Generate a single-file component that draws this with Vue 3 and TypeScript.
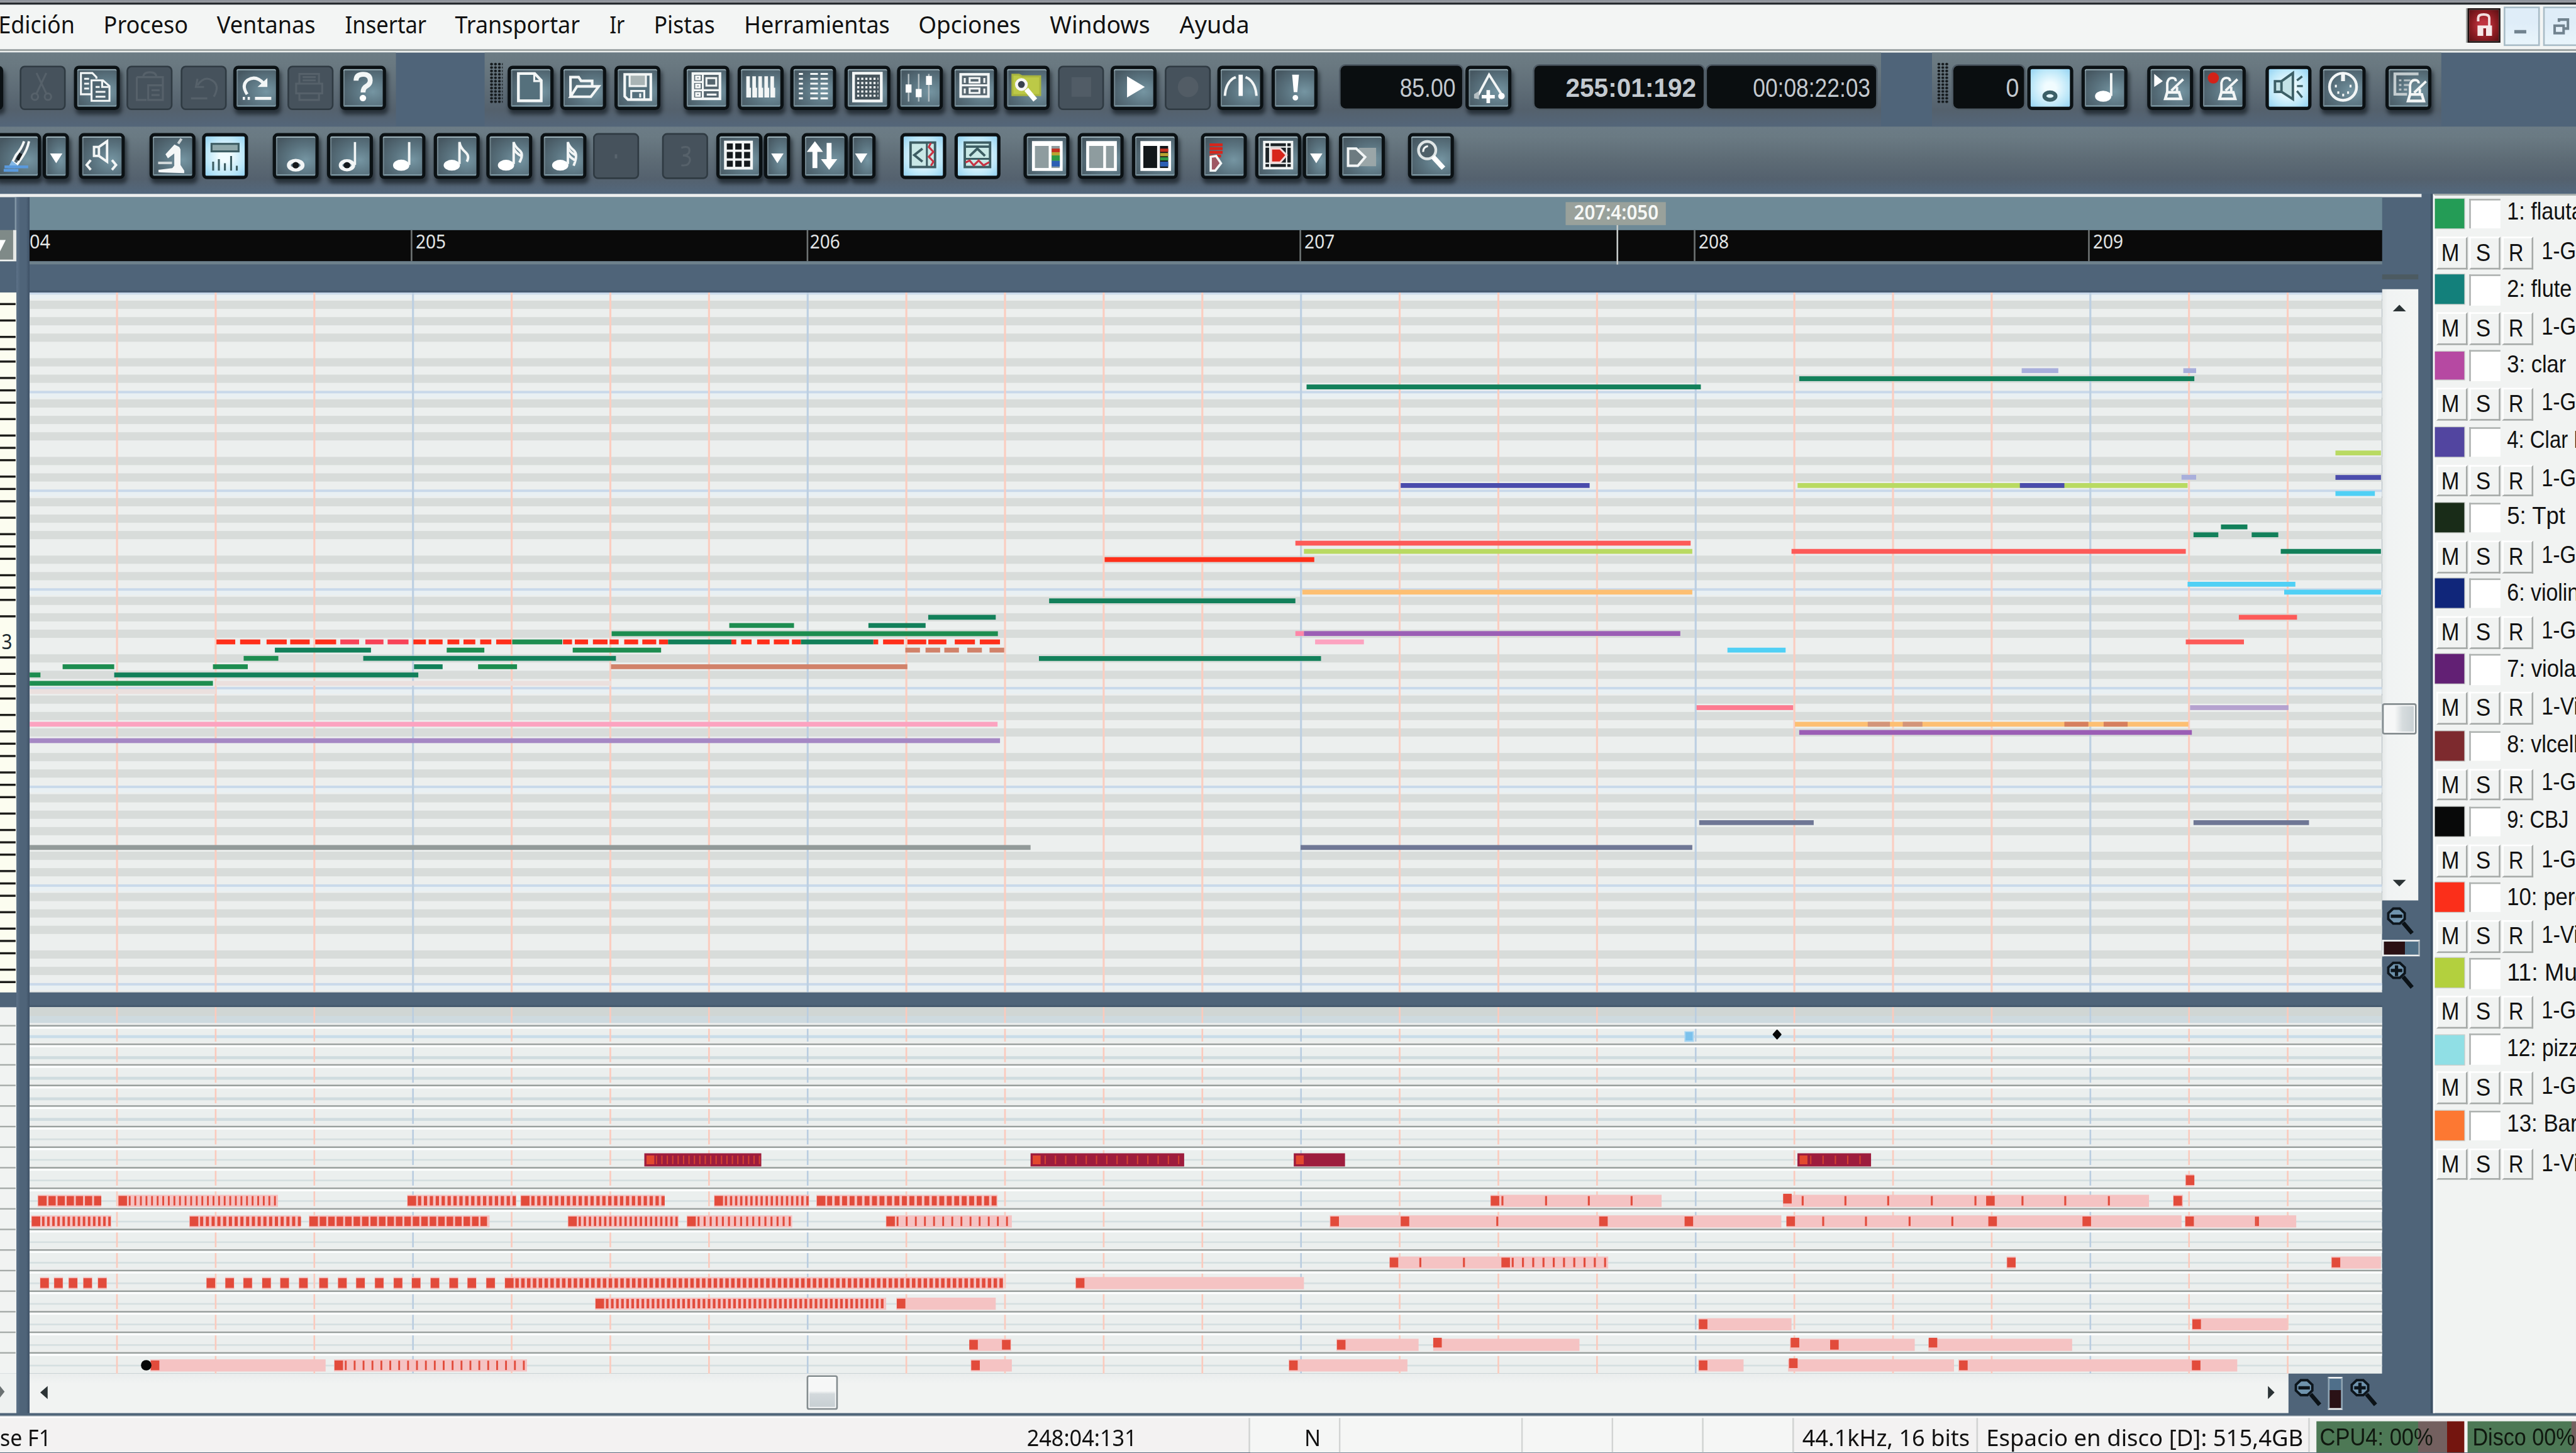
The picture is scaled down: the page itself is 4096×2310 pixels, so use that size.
<script setup lang="ts">
import { h, type FunctionalComponent } from 'vue'

// Text squeezed or stretched to an exact width
const Fit: FunctionalComponent<{ t: string; w: number; s: number }> = (p) =>
  h('svg', { width: p.w, height: p.s * 1.25, style: 'display:block;overflow:visible;flex:none' }, [
    h('text', { x: 0, y: p.s * 0.86, 'font-size': p.s, textLength: p.w, lengthAdjust: 'spacingAndGlyphs', fill: 'currentColor' }, p.t),
  ])
Fit.props = ['t', 'w', 's']

const menu: [string, number][] = [
  ['Edición', 46.5], ['Proceso', 51.5], ['Ventanas', 60], ['Insertar', 49.6], ['Transportar', 76], ['Ir', 9.3],
  ['Pistas', 37.2], ['Herramientas', 88.6], ['Opciones', 62.2], ['Windows', 61], ['Ayuda', 42.5],
]

const metro = (x: number, y: number) =>
  `<path d="M${x + 2} ${y + 8.5}V${y + 3}Q${x + 2.600} ${y} ${x + 5} ${y}T${x + 7.200} ${y + 2}M${x + 8} ${y + 5.5}V${y + 8.5}M${x + 4.5} ${y + 7.8}L${x + 11.8} ${y + 0.8}" stroke-width="1.5"/><path d="M${x + 0.8} ${y + 12.8}h9.600l-1.200-4h-7.200z" stroke-width="1.700"/>`
const icons: Record<string, string> = {
  none: '',
  cut: '<path d="M10 5.5L16 18M16 5.5L10 18"/><circle cx="9" cy="20" r="2"/><circle cx="17" cy="20" r="2"/>',
  copy: '<path d="M14.5 9V8L12 5.5H5v13h6" /><path d="M7 9h3M7 12h3M7 15h3"/><path d="M11.5 10h7l4 3.5v9h-11z" fill="#4f6570"/><path d="M18 10v4h4M14 14h2.5M14 17h6M14 20h6"/>',
  paste: '<path d="M6 8h16v10M6 8v14h6M10 8q0-3 4-3t4 3M13 13h9v9h-9zM15 16h5M15 19h5"/>',
  undo: '<path d="M10 9l-1 5h5M10 13q4-6 9-3t1 10M6 21h10"/>',
  redo: '<path d="M8.2 18.5Q4.500 13 8.500 9.800Q13.500 6.500 18.500 12" stroke-width="1.900"/><path d="M20.600 8.500v5.500h-6z" fill="#f3f6f6" stroke="none"/><path d="M13 21h10" stroke-width="1.800"/><path d="M5.500 21h1.400M8.500 21h1.400" stroke-width="1.800"/>',
  print: '<path d="M8 12V6h12v6M6 12h16v6H6zM8 18v4h12v-4M10 8h8M10 10h8"/>',
  help: '<path d="M9.500 10.200Q9.500 6.300 13.800 6.300T18.200 10Q18.200 12.300 15.800 13.600Q13.800 14.700 13.800 17.400" stroke-width="3"/><circle cx="13.700" cy="20.800" r="2" fill="#fff" stroke="none"/>',
  new: '<path d="M6.300 5.800h10l4 4.200v12.500h-14z" fill="#55707c" stroke-width="1.700"/><path d="M16 5.800v4.600h4.600"/>',
  open: '<path d="M6 19.500V8h5l1.500 2.300h6.800v4" stroke-width="1.600"/><path d="M6 20l4-6.300h13.300l-4.800 6.300z" fill="#55707c" stroke-width="1.600"/>',
  save: '<path d="M6 6.300h16v15.500H8l-2-2z" fill="#55707c" stroke-width="1.600"/><rect x="9" y="6.500" width="10" height="7" fill="#a9b4b5"/><path d="M10 21.500v-5h8v5M15.500 18v2.500"/>',
  tracks: '<rect x="5.500" y="5.800" width="16.600" height="15.500" fill="#55656e" stroke-width="1.600"/><path d="M11.600 6v15M5.500 16h16.500M5.500 11h6"/><rect x="7.500" y="7.600" width="2.200" height="1.700"/><rect x="7.500" y="12.600" width="2.200" height="1.700"/><rect x="7.500" y="17.800" width="2.200" height="1.700"/><rect x="13.800" y="8.600" width="6" height="4.600"/><path d="M14 18.700h6"/>',
  piano: [5, 8.7, 12.4, 16.1, 19.8].map((x) => `<path d="M${x} 7.500h2.200v7h.700v6h-2.900z" fill="#f3f6f6" stroke="none"/>`).join(''),
  list: [6, 9, 12, 15, 18, 21].map((y) => `<path d="M5 ${y}h2.500M12 ${y}h4.700M18.300 ${y}h4.500" stroke-width="1.200"/>`).join(''),
  dots: '<rect x="5.300" y="5.600" width="17" height="17" stroke-width="1.700" fill="#46545c"/>' + [9, 11.6, 14.2, 16.8, 19.4].map((y) => `<path d="M7.500 ${y}h13" stroke-dasharray="1.300 1.200" stroke-width="1.300"/>`).join(''),
  mixer: '<path d="M6.800 6v17M13 6v17M19.200 6v17" stroke="#b6c0c4" stroke-width=".9"/><path d="M5 12.500h3.600v5H5zM11.200 15.300h3.600v5h-3.600zM17.500 7.300h3.600v5.500h-3.600z" fill="#fff" stroke="none"/>',
  rack: '<rect x="5.500" y="6.300" width="17" height="13.600" stroke-width="1.600" fill="#55656e"/><path d="M5.500 13h17M8 8.500v3M20 8.500v3M8 15v3M20 15v3"/><rect x="11" y="8.600" width="6" height="2.700"/><rect x="11" y="15" width="6" height="2.700"/>',
  browse: '<path d="M5 6.500h4l2 1h11v11.500H5z" fill="#bcc947" stroke="#a9b53e"/><circle cx="10.500" cy="12.500" r="3" fill="#39414f" stroke="#f6f6f6" stroke-width="1.800"/><path d="M13.500 15.500L19 22" stroke-width="3" stroke="#fff"/>',
  stop: '<rect x="8" y="8" width="12" height="12" fill="#515c66" stroke="none"/>',
  play: '<path d="M9.800 7.500L20.700 14L9.800 20.500z" fill="#fff" stroke="none"/>',
  rec: '<circle cx="14" cy="14" r="6.300" fill="#525c65" stroke="none"/>',
  loop: '<path d="M4.300 19.500Q4.800 12 9.300 8.800L11 8M23.700 19.500Q23.200 12 18.700 8.800L17 8" stroke-width="1.500"/><path d="M14 6.500v13" stroke="#fff" stroke-width="2.600"/>',
  bang: '<path d="M12.300 6.500h4.200l-1 10.700h-2.200z" fill="#fff" stroke="none"/><circle cx="14.300" cy="20.600" r="1.700" fill="#fff" stroke="none"/>',
  tempo: '<path d="M7.500 19L14.200 6.500L21.800 18.500" stroke-width="1.500"/><path d="M5 21v-2.500l3-2v5z" fill="#b4bec2" stroke="none"/><circle cx="21.800" cy="19.600" r="2" fill="#fff" stroke="none"/><path d="M13.700 16v8M9.700 20h8" stroke="#fff" stroke-width="2.200"/>',
  whole: '<ellipse cx="13.800" cy="19.700" rx="4.200" ry="2.700" stroke-width="2.400"/><ellipse cx="13.800" cy="19.700" rx="2" ry="2" fill="#14191c" stroke="none"/>',
  wholeLit: '<ellipse cx="13.600" cy="19.600" rx="3.400" ry="2.300" stroke="#3c5f66" stroke-width="2.400"/>',
  half: '<ellipse cx="13" cy="19.700" rx="3.900" ry="2.600" stroke-width="2.300"/><ellipse cx="13" cy="19.700" rx="2" ry="1.900" fill="#14191c" stroke="none"/><path d="M17.900 5.500v14" stroke-width="1.400"/>',
  quarter: '<ellipse cx="13" cy="19.700" rx="5" ry="3.400" fill="#fff" stroke="none"/><path d="M17.900 5.500v14" stroke-width="1.500"/>',
  n8: '<ellipse cx="11.800" cy="19.700" rx="5" ry="3.300" fill="#fff" stroke="none"/><path d="M16.500 19V5.500Q17 9 20 11.500T21 17.500" stroke-width="1.500"/>',
  n16: '<ellipse cx="11.800" cy="19.700" rx="5" ry="3.300" fill="#fff" stroke="none"/><path d="M16.500 19V5.500Q17 8 20 10.500T20 18M16.600 9.500Q17.500 12 21 14" stroke-width="1.500"/>',
  n32: '<ellipse cx="11.800" cy="19.700" rx="5" ry="3.300" fill="#fff" stroke="none"/><path d="M16.500 19V5.500Q17 8 20 10.500T20 20M16.600 9Q17.500 11.500 21 13.500M16.600 12.500Q17.500 15 21.500 17" stroke-width="1.500"/>',
  dot: '<rect x="13" y="13" width="1.500" height="2.500" stroke="none" fill="#59646d"/>',
  triplet: '<path d="M11.500 9q5-1.500 5 1.500t-4 3.200q5 .3 4.200 3.500t-5.200 2.500"/>',
  midi: '<circle cx="14" cy="13.900" r="8.300" stroke-width="1.700"/><path d="M14 5.500v5" stroke-width="2.400"/><path d="M9 13.500h1.200M10.500 17.500h1.200M13.500 19h1.200M16.500 17.500h1.200M18 13.500h1.200" stroke-width="1.600"/>',
  metroPlay: '<path d="M5 6l5.300 4.500L5 14z" fill="#fff" stroke="none"/>' + metro(11, 8.5),
  metroRec: '<ellipse cx="8" cy="8.500" rx="3.400" ry="3.400" fill="#d32218" stroke="none"/>' + metro(11, 8.5),
  metroSet: '<path d="M20 6H5.500v12.500H13" stroke="#c3cccf" stroke-width="1.700"/><path d="M8 10h1.500M11 10h4M8 12.800h1.500M11 12.800h3M8 15.600h1.500M11 15.600h2" stroke="#b4bec2"/>' + metro(12.8, 9.8),
  sound: '<path d="M5.500 10.500h4v6.500h-4zM9.500 10.500L16.500 5.500V21.500L9.500 17" stroke="#3c5f66" stroke-width="1.500" fill="#c4e2e6"/><path d="M19 10l3.200-2.500M19 13.500h3.600M19 16.500l3.200 4" stroke="#3c5f66" stroke-width="1.300"/>',
  brush: '<path d="M18.500 5Q17 9.500 13.500 13.500L11.500 17.500L14 19.500L17.500 14.500Q20.500 10 21.500 5" fill="#51636e" stroke-width="1.500"/><path d="M16.500 12.500l-2 4" stroke="#14191c" stroke-width="2"/><path d="M11 16.800l3.500 2.900-1.500 1.800H8.500z" fill="#84b8e6" stroke="none"/><path d="M6.500 20.700h14.500M6 22.800h9" stroke="#5a9ade" stroke-width="1.800"/>',
  scrub: '<path d="M9 8.500h3v5.500H9zM12 8.500L17 5V17.500L12 14" stroke-width="1.500"/><path d="M7 16.500l-2.500 3 2.500 3M20 16.500l2.500 3-2.500 3" stroke-width="1.500"/>',
  micro: '<path d="M6.200 24v-1.500l8.500-1 1.200-1.500V12.500L12 15.500l-1.500-2.500 5.500-6 3 1.500.7 1.500v9.500l2.300 3.500v1.500z" fill="#f5f7f7" stroke="none"/><path d="M18.300 6.500l2-3M6 18.300h8.500" stroke="#cfd6d8" stroke-width="1.600"/>',
  infoLit: '<rect x="5.500" y="6.600" width="16.600" height="4.600" fill="#8fa8aa" stroke="#3d5d63"/><path d="M6.500 23v-5.500M10 23v-7M13.700 23v-4.500M17.500 23v-9M21 23v-3" stroke="#3d5d63" stroke-width="1.200"/>',
  grid: '<rect x="5.300" y="5.500" width="16" height="16" fill="#14191c" stroke-width="1.700"/><path d="M10.600 5.500v16M16 5.500v16M5.300 10.800h16M5.300 16.200h16" stroke-width="1.500"/>',
  updown: '<path d="M8.800 21.500V10M17.500 6v11" stroke="#fff" stroke-width="3"/><path d="M3.800 11.500h10L8.800 5zM12.500 16h10L17.500 22.500z" fill="#fff" stroke="none"/>',
  foldL: '<rect x="6" y="5.800" width="15" height="15" fill="#c9e8e6" stroke="#3d5d63" stroke-width="1.500"/><path d="M16 6v15" stroke="#3d5d63"/><path d="M13.300 9.500l-5 4 5 4" stroke="#3d5d63" stroke-width="1.500"/><path d="M18.500 6l-1.300 2.500 2.800 3-2.800 3 2.800 3-1.500 2.500" stroke="#c63344" stroke-width="1.200"/>',
  foldU: '<rect x="6" y="5.800" width="15.500" height="15" fill="#c9e8e6" stroke="#3d5d63" stroke-width="1.500"/><path d="M6 8.300h15.500" stroke="#3d5d63" stroke-width="1.500"/><path d="M6 15.800h15.500" stroke="#3d5d63"/><path d="M9 14l4.700-4.500 4.700 4.500" stroke="#3d5d63" stroke-width="1.500"/><path d="M6.500 18l2.500-1.200 2.500 3 3-3 3 3 3.500-2" stroke="#c63344" stroke-width="1.200"/>',
  paneA: '<rect x="5.800" y="5.800" width="17" height="16.500" fill="#8e9c9f" stroke="#fff" stroke-width="1.800"/><path d="M5.500 7h17.500M16 6v16" stroke="#fff" stroke-width="1.700"/><path d="M17 9.500h5v2.200h-5z" fill="#c43020" stroke="none"/><path d="M17 11.700h5v2h-5z" fill="#b9a431" stroke="none"/><path d="M17 13.700h5V17h-5z" fill="#2f9a44" stroke="none"/><path d="M17 17h5v3.500h-5z" fill="#2c5fb4" stroke="none"/>',
  paneB: '<rect x="5.800" y="5.800" width="17" height="16.500" fill="#8e9c9f" stroke="#fff" stroke-width="1.800"/><path d="M5.500 7h17.500M16.200 6v16" stroke="#fff" stroke-width="1.700"/>',
  paneC: '<rect x="5.800" y="5.800" width="17" height="16.500" fill="#12171a" stroke="#fff" stroke-width="1.800"/><path d="M5.500 7h17.500M16 6v16" stroke="#fff" stroke-width="1.700"/><path d="M17 9.500h5v2h-5z" fill="#c43020" stroke="none"/><path d="M17 12.200h5v2h-5z" fill="#b9a431" stroke="none"/><path d="M17 14.800h5v2h-5z" fill="#2f9a44" stroke="none"/><path d="M17 17.500h5v3h-5z" fill="#2c5fb4" stroke="none"/>',
  redA: '<path d="M5 7.200h8M5 9.500h8M5 11.800h8M5 14.100h7" stroke="#d8251b" stroke-width="1.700"/><path d="M5.700 14.500l3.300-.5 3 4.500-3.500 4.500H5.700z" fill="#9e5763" stroke-width="1.400"/>',
  redB: '<rect x="5.300" y="5.500" width="17" height="16" fill="#1c2226" stroke-width="1.500"/><path d="M8.700 5.500v16M19 5.500v16M5.300 8.500h17M5.300 18.500h17" stroke-width=".9"/><path d="M9.500 9.500h5.500l4 4-4 4.500h-5.500z" fill="#d8251b" stroke="#f3d9d9"/>',
  flagOut: '<path d="M12 9h10.500v11.300H10z" fill="#9aa6a8" stroke="none"/><path d="M5.300 9.500h5l5.500 5.200-4.500 5.300h-6z" stroke-width="1.500" fill="#6d7b80"/>',
  lens: '<circle cx="11.500" cy="10.500" r="5.300" stroke="#dfe5e6" stroke-width="1.700" fill="#4f6069"/><path d="M15 14.500L21.500 21.500" stroke="#fff" stroke-width="3"/><path d="M9 11.500q0-3 3-3.500"/>',
  drop: '<path d="M4.200 12.500h7.600L8 18.500z" fill="#fff" stroke="none"/>',
}

interface Item { k: string; i?: string; c?: string; x: number; w?: number; t?: string; tw?: number }
interface Placed extends Item { lead: number; wd: number }
// Turns left edges into the leading margin of each flex item
const place = (start: number, items: Item[]): Placed[] => {
  let end = start
  return items.map((it) => {
    const wd = it.w ?? 28
    const lead = +(it.x - end).toFixed(2)
    end = it.x + wd
    return { ...it, lead, wd }
  })
}
const b = (x: number, i: string, c = ''): Item => ({ k: 'b', x, i, c })
const seg1 = place(0, [b(-26, 'none'), b(12.3, 'cut', 'off'), b(44.6, 'copy'), b(77.2, 'paste', 'off'), b(109.8, 'undo', 'off'), b(142.1, 'redo'), b(174.7, 'print', 'off'), b(207.2, 'help')])
const seg2 = place(295, [
  { k: 'g', x: 298, w: 7.5 }, b(308.7, 'new'), b(341, 'open'), b(373.6, 'save'), b(416.2, 'tracks'), b(448.8, 'piano'), b(481.1, 'list'), b(513.7, 'dots'),
  b(546.3, 'mixer'), b(578.9, 'rack'), b(611.2, 'browse'), b(643.8, 'stop', 'off'), b(676.3, 'play'), b(709.2, 'rec', 'off'), b(741.3, 'loop'), b(773.8, 'bang'),
  { k: 'd', x: 815.8, w: 73.6, t: '85.00', tw: 34 }, b(891.8, 'tempo'), { k: 'd', x: 933.6, w: 103, t: '255:01:192', tw: 79.5, c: 'bold' }, { k: 'd', x: 1039.2, w: 103, t: '00:08:22:03', tw: 71.5 },
])
const seg3 = place(1175.6, [
  { k: 'g', x: 1179, w: 7.5 }, { k: 'd', x: 1188.8, w: 43.4, t: '0', tw: 8 }, b(1234.3, 'wholeLit', 'lit'), b(1266.9, 'quarter'), b(1306.7, 'metroPlay'),
  b(1339.4, 'metroRec'), b(1379.2, 'sound', 'lit'), b(1411.9, 'midi'), b(1451.9, 'metroSet'),
])
const dd = (x: number): Item => ({ k: 'b', x, i: 'drop', c: 'thin', w: 16 })
const row2 = place(0, [
  b(-3.5, 'brush'), dd(26.2), b(48.4, 'scrub'), b(90.7, 'micro'), b(123, 'infoLit', 'lit'), b(165.9, 'whole'), b(198.7, 'half'), b(231, 'quarter'), b(263.6, 'n8'),
  b(296.2, 'n16'), b(328.8, 'n32'), b(361.4, 'dot', 'off'), b(403.4, 'triplet', 'off'), b(436.3, 'grid'), dd(465.4), b(487.6, 'updown'), dd(516.7), b(548.5, 'foldL', 'lit'),
  b(581.1, 'foldU', 'lit'), b(623.5, 'paneA'), b(656.3, 'paneB'), b(688.9, 'paneC'), b(731.5, 'redA'), b(764, 'redB'), dd(793), b(815.3, 'flagOut'), b(857.6, 'lens'),
])

const bars: [string, number, number][] = [['04', 18, 12.6], ['205', 250.4, 18.4], ['206', 490.7, 18.4], ['207', 791, 18.4], ['208', 1031, 18.4], ['209', 1271.3, 18.4]]

const vlines = Array.from({ length: 23 }, (_, n) => ({ x: 71.2 + 60.06 * n, bar: [3, 7, 12, 16, 20].includes(n) }))
const octaves = Array.from({ length: 8 }, (_, n) => 178.1 + 60.07 * n)
const keyTicks = Array.from({ length: 8 }, (_, n) => 177.1 + 60.02 * n)
  .flatMap((o) => [0, 7.5, 17.5, 27.5, 35, 42.5, 52.5].map((d) => o + d))
  .filter((y) => y < 603 && y > 179 && !(y > 384 && y < 394))

const G = '#12805a', G2 = '#1d8d50', RED = '#fd5a58', HOT = '#ff2f1a', LIME = '#b9da62', CY = '#50d0f5', IND = '#4a4cac', LAV = '#a9afdb',
  OR = '#fdbf72', PU = '#9b5eb5', PK = '#fca3c0', BR = '#d1826a', SL = '#6f7795'
type Note = [number, number, number, string]
const notes: Note[] = [
  [795.3, 1035.3, 235.1, G], [1095.2, 1335.7, 230.1, G], [1230.6, 1252.9, 225.2, LAV], [1329, 1336.8, 225.2, LAV], [1421.6, 1449.3, 275.3, LIME],
  [1327.9, 1336.8, 290.1, LAV], [1421.6, 1449.3, 290.2, IND], [852.6, 967.6, 295.1, IND], [1094.2, 1331.6, 295.1, LIME], [1229.5, 1256.6, 295.1, IND],
  [1421.6, 1445.6, 300, CY], [1351.9, 1368, 320.3, G], [1335.2, 1350.3, 325.1, G], [1370.6, 1386.8, 325.1, G], [788.5, 1029.1, 330.2, RED],
  [793.7, 1030.1, 335.2, LIME], [1090.5, 1330.5, 335.2, RED], [1388.3, 1449.3, 335.2, G], [672.4, 800, 340.2, HOT], [1331.6, 1397.2, 355.2, CY],
  [792.7, 1030.1, 360, OR], [1390.4, 1449.3, 360, CY], [638.6, 788.5, 365.3, G], [1362.8, 1398.2, 375.3, RED], [788.5, 793.7, 385.2, '#fd86a8'],
  [793.7, 1022.8, 385.2, PU], [800.5, 830.2, 390.3, PK], [1330.5, 1365.9, 390.3, RED], [1051.5, 1086.9, 395.3, CY], [632.4, 804.1, 400.4, G],
  [1032.7, 1091.5, 430.3, '#fd7b90'], [1333.1, 1393, 430.3, '#b5a2cf'], [1092.6, 1332.1, 440.4, OR], [1136.9, 1150.4, 440.4, '#d3957a'],
  [1158.2, 1170.2, 440.4, '#d3957a'], [1256.6, 1271.2, 440.4, '#d67f5e'], [1280.5, 1295.1, 440.4, '#d67f5e'], [1095.2, 1334.2, 445.4, PU],
  [1034.3, 1104, 500.3, SL], [1335.2, 1405.5, 500.3, SL], [791.7, 1030.1, 515.4, SL],
  [565, 606.1, 375.3, G], [443.9, 483.3, 380.3, G2], [528.6, 563.4, 380.3, G], [372.3, 607.4, 385.3, G2], [167.3, 225.8, 395.3, G], [271.9, 294.8, 395.3, G2],
  [348.6, 402.4, 395.3, G2], [148.3, 169.4, 400.3, G2], [221.1, 374.9, 400.3, G], [38.1, 69.5, 405.4, G2], [129.6, 150.8, 405.4, G2], [252, 269.4, 405.4, G],
  [291, 314.7, 405.4, G2], [371.9, 552.3, 405.4, BR], [18, 24.6, 410.4, G2], [69.5, 254.6, 410.4, G], [18, 129.6, 415.5, G2],
  [131.3, 371.9, 415.5, '#ebe0de'], [18, 131.3, 420.5, '#ebe0de'], [18, 607.2, 440.4, PK], [18, 608.7, 450.4, '#a588c4'], [18, 627.3, 515.4, '#929a99'],
]
const kz = 0.42358
const dash = (y: number, c: string, l: number[][]): Note[] => l.map(([a, z]) => [a * kz, z * kz, y, c] as Note)
notes.push(
  ...dash(395.3, BR, [[1301, 1322], [1330, 1351], [1357, 1378], [1390, 1411], [1422, 1443]]),
  ...dash(390.3, '#f84358', [[489, 516], [525, 551], [557, 587]]),
  ...dash(390.3, HOT, [[311, 338], [345, 374], [383, 412], [417, 445], [453, 483], [594, 612], [616, 636], [643, 660], [666, 683], [690, 706], [713, 735], [809, 822], [826, 845],
    [852, 873], [876, 889], [897, 917], [923, 943], [947, 960], [1051, 1058], [1065, 1080], [1088, 1106], [1112, 1134], [1138, 1151], [1255, 1262], [1269, 1299], [1304, 1331],
    [1334, 1360], [1372, 1401], [1408, 1437]]),
  ...dash(390.3, G2, [[736, 808]]), ...dash(390.3, G, [[960, 1051], [1151, 1255]]),
)

// Controller lanes
const laneLines = [623.5, ...Array.from({ length: 16 }, (_, n) => 634.8 + 12.52 * n)]
interface Rect { x: number; y: number; w: number; h: number; f: string }
const ev: Rect[] = []
const P = '#f5c3c3', E = '#e24b3b'
const laneY = (n: number) => 647.4 + 12.52 * (n - 2) // bottom line of lane n
const block = (lane: number, x0: number, x1: number, pitch = 0, bw = 1, heads: number[] = [x0 + 2.9], thin: number[] = []) => {
  const c = laneY(lane) - 4.6
  ev.push({ x: x0, y: c - 3.6, w: x1 - x0, h: 7.4, f: P })
  if (pitch) for (let x = x0 + 6.6; x < x1 - bw * 0.6; x += pitch) ev.push({ x, y: c - 2.8, w: bw, h: 5.7, f: E })
  heads.forEach((x) => ev.push({ x: Math.abs(x) - 2.6, y: c - (x < 0 ? 4.2 : 2.9), w: 5.2, h: 5.9, f: E }))
  thin.forEach((x) => ev.push({ x: x - 0.6, y: c - 2.8, w: 1.2, h: 5.7, f: E }))
}
const kb = 0.52065
const q = (z: number) => 636.5 + kb * z
const crimson = (x0: number, x1: number, pitch: number, off = 6.5) => {
  const c = laneY(7) - 4.4
  ev.push({ x: x0, y: c - 4, w: x1 - x0, h: 8, f: '#9d1c3d' })
  if (pitch) for (let x = x0 + off; x < x1 - 1; x += pitch) ev.push({ x, y: c - 2.6, w: 0.8, h: 5.2, f: '#d2402f' })
  ev.push({ x: x0 + 1.3, y: c - 2.7, w: 4.8, h: 5.4, f: '#e2492f' })
}
crimson(392.2, 463.4, 3.3, 7); crimson(627.3, 720.8, 6.25, 8.5); crimson(787.5, 818.7, 0); crimson(1094.1, 1138.9, 7.5, 7.7)
block(8, 1330.2, 1335.6)
block(9, 22.9, 61.6, 5.55, 4.4); block(9, 71.8, 169.2, 3.4, 1.1); block(9, 247.8, 314.3, 3.6, 2); block(9, 316.8, 404.6, 3.6, 2); block(9, 434.6, 492.6, 3.1, 1.4)
block(9, 496.9, 607.2, 4.55, 3); block(9, 907.2, 1011.4, 0, 1, [910], [534, 585, 635, 685].map(q))
block(9, 1085.3, 1308.1, 0, 1, [-1088, q(1104.5)], [885, 935, 985, 1036, 1087, 1142, 1192, 1243].map(q)); block(9, 1322.7, 1328.8)
block(10, 19, 67.8, 3.1, 1.5); block(10, 115.2, 183, 3.5, 1.9); block(10, 188, 298, 5.15, 4); block(10, 345.6, 413.1, 3.1, 1.4); block(10, 418, 482.2, 3.7, 1.2)
block(10, 539.2, 615.9, 5.55, 1.1); block(10, 809.4, 1084.3, 0, 1, [812.4, 855.2, 976, 1028], [911.4]); block(10, 1087.4, 1327.9, 0, 1, [1090, 1212.9, 1270.2], [909, 959, 1010, 1060].map(q))
block(10, 1330, 1397.7, 0, 1, [1332.8], [1373.2, 1374.4])
block(12, 845.8, 978.9, 0, 1, [848.5, 916.5], [438, 489, 546, 558, 570, 582, 594, 606, 618, 630, 642, 654].map(q)); block(12, 1221.4, 1227, 0, 1, [1224.3]); block(12, 1419, 1449.3)
;[64, 84, 105, 126, 147, 303, 330, 356, 383, 409, 436, 465, 492, 518, 545, 572, 598, 625, 652, 678, 705].forEach((z) => block(13, z * kz - 2.8, z * kz + 2.8, 0, 1, [z * kz]))
block(13, 307.1, 610.8, 3.55, 2.1); block(13, 654.6, 793.7)
block(14, 362.2, 539.4, 3.1, 1.6); block(14, 545.6, 606.1)
block(15, 1033.8, 1090.5); block(15, 1334.2, 1392.5)
block(16, 590, 615.5, 0, 1, [592.6, 612.5]); block(16, 813.5, 863.5); block(16, 872.4, 961.4, 0, 1, [-875]); block(16, 1089.5, 1165.5, 0, 1, [-1092.6, 1116.6]); block(16, 1173.8, 1261.3, 0, 1, [-1176.6])
block(17, 91.5, 198.2); block(17, 203.3, 320.8, 5.42, 1.1); block(17, 590.9, 615.9); block(17, 784.4, 856.7); block(17, 1033.8, 1061.3); block(17, 1088.4, 1189.4, 0, 1, [-1091.6])
block(17, 1192, 1361.8, 0, 1, [1195.1, 1336.8])

const tracks: [string, string, string, number, number][] = [
  ['1: flauta', '#249c56', '1-Ge', 46.5, 28], ['2: flute', '#13807b', '1-Ge', 39.5, 28], ['3: clar', '#b649a2', '1-Ge', 36, 28], ['4: Clar B', '#5245a0', '1-Ge', 49, 28],
  ['5: Tpt', '#192c18', '1-Ge', 35.5, 28], ['6: violin', '#10267a', '1-Ge', 44, 28], ['7: viola', '#622074', '1-Vi', 42, 22.5], ['8: vlcell', '#7d2a2e', '1-Ge', 43.5, 28],
  ['9: CBJ', '#080909', '1-Ge', 37.5, 28], ['10: perc', '#fb2f1a', '1-Vi', 48, 22.5], ['11: Mus', '#b3d03e', '1-Ge', 50, 28], ['12: pizz', '#90dfe5', '1-Ge', 44, 28],
  ['13: Bar', '#fd7832', '1-Vi', 43, 22.5],
]
</script>

<template>
  <div class="stage">
    <div class="screen">
      <div class="edge"></div>
      <div class="menubar">
        <nav class="menu">
          <Fit v-for="m in menu" :key="m[0]" :t="m[0]" :w="m[1]" :s="14.4" />
        </nav>
        <div class="winbtns">
          <div class="lock">
            <svg viewBox="0 0 22 22"><path d="M6.500 8V5.500Q6.500 3 10.500 3T14.500 5.500V12" fill="none" stroke="#f2dede" stroke-width="1.800" /><path d="M6 11h10.500v7.500H6z" fill="#f7e9e9" /><path d="M11.200 13v5.500" stroke="#8d1d24" stroke-width="2" /></svg>
          </div>
          <div class="wb"><svg viewBox="0 0 22 24"><rect x="6" y="14.500" width="8" height="2.300" fill="#71838f" /></svg></div>
          <div class="wb last"><svg viewBox="0 0 22 24"><path d="M9.500 9V7.500h6v6H13" fill="none" stroke="#71838f" stroke-width="1.700" /><rect x="6.600" y="11.600" width="6" height="5" fill="#e6f1fa" stroke="#71838f" stroke-width="1.700" /></svg></div>
        </div>
      </div>

      <div class="bar bar1">
        <div v-for="(s, n) in [seg1, seg2, seg3]" :key="n" class="seg" :class="'s' + n">
          <div v-for="(it, i) in s" :key="i" :class="[it.k === 'b' ? 'btn' : it.k === 'd' ? 'disp' : 'grip', it.c]" :style="{ width: it.wd + 'px', marginLeft: it.lead + 'px' }">
            <svg v-if="it.k === 'b'" viewBox="0 0 28 28" v-html="icons[it.i!]"></svg>
            <Fit v-if="it.t" :t="it.t" :w="it.tw!" :s="16.2" />
          </div>
        </div>
      </div>
      <div class="bar bar2">
        <div v-for="(it, i) in row2" :key="i" class="btn" :class="it.c" :style="{ width: it.wd + 'px', marginLeft: it.lead + 'px' }">
          <svg :viewBox="it.c === 'thin' ? '0 0 16 28' : '0 0 28 28'" v-html="icons[it.i!]"></svg>
        </div>
      </div>

      <div class="main">
        <div class="editor">
          <div class="whiteline"></div>
          <div class="cols">
            <div class="left">
              <div class="lgap"></div>
              <div class="lbtn"><svg viewBox="0 0 8 18"><path d="M0 6h3.500L0 13z" fill="#fff" /></svg></div>
              <div class="lgap2"></div>
              <div class="keys">
                <svg width="10" height="426.700" viewBox="0 177.600 10 426.700">
                  <rect v-for="y in keyTicks" :key="y" x="0" :y="y - 0.6" width="9.500" height="1.300" fill="#1d1d1a" />
                  <text x="1" y="394.500" font-size="12.500" textLength="6.500" lengthAdjust="spacingAndGlyphs" fill="#1c2a30">3</text>
                </svg>
              </div>
              <div class="lgap3"></div>
              <div class="lnames">
                <svg width="10" height="223.500" viewBox="0 612.700 10 223.500"><rect v-for="y in laneLines" :key="y" x="0" :y="y" width="9.500" height=".9" fill="#a5aaa8" /></svg>
              </div>
              <div class="lscroll"><svg viewBox="0 0 10 23"><path d="M0 7.500L2.800 11L0 14.500z" fill="#6b7172" /></svg></div>
            </div>
            <div class="split"></div>
            <div class="center">
              <div class="teal"><div class="tip"><Fit t="207:4:050" :w="51.5" :s="12.2" /></div></div>
              <div class="ruler">
                <div v-for="(r, i) in bars" :key="r[0]" class="rb" :style="{ width: (i < 5 ? bars[i + 1][1] - r[1] : 178) + 'px' }"><Fit :t="r[0]" :w="r[2]" :s="11.9" /></div>
              </div>
              <div class="underline"></div>
              <div class="gap"></div>
              <svg class="roll" width="1431.500" height="426.700" viewBox="18 177.600 1431.500 426.700">
                <rect x="18" y="177" width="1432" height="428" fill="#ecefee" />
                <g v-for="o in octaves" :key="o">
                  <rect v-for="d in [4.5, 14.5, 24.5, 39.5, 49.5]" :key="d" x="18" :y="o + d" width="1432" height="5" fill="#d8dcda" />
                  <rect x="18" :y="o + 0.5" width="1432" height="3" fill="#e9f0f3" />
                  <rect x="18" :y="o - 0.7" width="1432" height="1.500" fill="#c9d9ea" />
                </g>
                <rect v-for="l in vlines" :key="l.x" :x="l.x - 0.6" y="177" width="1.200" height="428" :fill="l.bar ? '#bccfe2' : '#fbcdc0'" />
                <rect v-for="(n, i) in notes" :key="i" :x="n[0]" :y="n[2] - 1.5" :width="n[1] - n[0]" height="2.950" :fill="n[3]" />
              </svg>
              <div class="gap2"></div>
              <svg class="lanes" width="1431.500" height="223.500" viewBox="18 612.700 1431.500 223.500">
                <rect x="18" y="612" width="1432" height="225" fill="#ebefee" />
                <rect x="18" y="612" width="1432" height="6.500" fill="#d0d6d4" />
                <rect x="18" y="618" width="1432" height="5.500" fill="#cedadf" />
                <rect v-for="(y, i) in laneLines" :key="y" x="18" :y="y + (i === 0 ? 6.200 : 7.700)" width="1432" :height="i < 5 ? 1.800 : 1" :fill="i === 0 ? '#c9dde9' : i < 5 ? '#d0dcdf' : '#d5dfe0'" />
                <rect v-for="l in vlines" :key="l.x" :x="l.x - 0.5" y="612" width="1" height="225" :fill="l.bar ? '#bacde0' : '#fbcabd'" />
                <g v-for="y in laneLines" :key="'s' + y">
                  <rect x="18" :y="y - 1.2" width="1432" height="1.300" fill="#eceeed" />
                  <rect x="18" :y="y" width="1432" height="1" fill="#999f9d" />
                  <rect x="18" :y="y + 1" width="1432" height="1.300" fill="#fcfefe" />
                </g>
                <rect v-for="(r, i) in ev" :key="i" :x="r.x" :y="r.y" :width="r.w" :height="r.h" :fill="r.f" />
                <rect x="1025.300" y="627.300" width="5.800" height="6.500" fill="#a9d6f2" /><rect x="1026" y="627.900" width="4.300" height="5" fill="#7cc2ec" />
                <path d="M1081.700 626.800l2.200 2.500-2.200 2.500-2.200-2.500z" fill="#060707" stroke="#060707" stroke-width="1" stroke-linejoin="round" />
                <circle cx="89" cy="830.600" r="3.200" fill="#060707" />
              </svg>
              <div class="hrow">
                <div class="hscroll">
                  <svg class="a1" viewBox="0 0 6 9"><path d="M5 .5v8L.5 4.500z" fill="#2b3335" /></svg>
                  <div class="hthumb"></div>
                  <svg class="a2" viewBox="0 0 6 9"><path d="M.5 .5v8L4.500 4.500z" fill="#2b3335" /></svg>
                </div>
                <svg class="mag" viewBox="0 0 17 17"><path d="M4.500 1h4l3 2.800v3.500l-3 2.800h-4l-3-2.800V3.800z" fill="#6f93ad" stroke="#0d151c" stroke-width="1.500" /><path d="M3 5.600h7" stroke="#0d151c" stroke-width="2" /><path d="M10.500 9.500l5.500 6.500" stroke="#0b1217" stroke-width="2.500" /></svg>
                <div class="vslider"></div>
                <svg class="mag" viewBox="0 0 17 17"><path d="M4.500 1h4l3 2.800v3.500l-3 2.800h-4l-3-2.800V3.800z" fill="#6f93ad" stroke="#0d151c" stroke-width="1.500" /><path d="M3 5.600h7M6.500 2.500v6.500" stroke="#0d151c" stroke-width="2" /><path d="M10.500 9.500l5.500 6.500" stroke="#0b1217" stroke-width="2.500" /></svg>
              </div>
            </div>
            <div class="right">
              <div class="nub"></div>
              <div class="vscroll">
                <svg class="up" viewBox="0 0 9 5"><path d="M.5 4.500h8L4.500 .5z" fill="#2b3335" /></svg>
                <div class="vthumb"></div>
                <svg class="down" viewBox="0 0 9 5"><path d="M.5 .5h8L4.500 4.500z" fill="#2b3335" /></svg>
              </div>
              <svg class="vmag" viewBox="0 0 17 17"><path d="M4.500 1h4l3 2.800v3.500l-3 2.800h-4l-3-2.800V3.800z" fill="#6f93ad" stroke="#0d151c" stroke-width="1.500" /><path d="M3 5.600h7" stroke="#0d151c" stroke-width="2" /><path d="M10.500 9.500l5.500 6.500" stroke="#0b1217" stroke-width="2.500" /></svg>
              <div class="hslider"></div>
              <svg class="vmag" viewBox="0 0 17 17"><path d="M4.500 1h4l3 2.800v3.500l-3 2.800h-4l-3-2.800V3.800z" fill="#6f93ad" stroke="#0d151c" stroke-width="1.500" /><path d="M3 5.600h7M6.500 2.500v6.500" stroke="#0d151c" stroke-width="2" /><path d="M10.500 9.500l5.500 6.500" stroke="#0b1217" stroke-width="2.500" /></svg>
            </div>
          </div>
        </div>
        <aside class="tracks">
          <div v-for="t in tracks" :key="t[0]" class="track">
            <div class="l1">
              <i class="sw" :style="{ background: t[1] }"></i><i class="box"></i><Fit class="name" :t="t[0]" :w="t[3]" :s="14.8" />
            </div>
            <div class="l2">
              <span v-for="c in ['M', 'S', 'R']" :key="c" class="msr"><Fit :t="c" :w="c === 'M' ? 11 : 9" :s="14.8" /></span>
              <Fit class="port" :t="t[2]" :w="t[4]" :s="14.8" />
            </div>
          </div>
        </aside>
      </div>

      <footer class="status">
        <div class="cell c0"><Fit t="se F1" :w="31" :s="14.2" /><Fit class="pos" t="248:04:131" :w="67" :s="14.2" /></div>
        <div class="cell c1"><Fit t="N" :w="10" :s="14.2" /></div>
        <div class="cell c2"></div><div class="cell c3"></div><div class="cell c3"></div><div class="cell c3"></div>
        <div class="cell c4"><Fit t="44.1kHz, 16 bits" :w="102" :s="14.2" /></div>
        <div class="cell c5"><Fit t="Espacio en disco [D]: 515,4GB" :w="193" :s="14.2" /></div>
        <div class="cpu"><Fit t="CPU4: 00%" :w="69" :s="14.8" /></div>
        <div class="disk"><Fit t="Disco 00%" :w="62.5" :s="14.8" /></div>
      </footer>
    </div>
  </div>
</template>

<style>
body { margin: 0; background: #4f6479; }
</style>
<style scoped>
.stage { width: 4096px; height: 2310px; overflow: hidden; }
.screen { width: 1568px; height: 884.4px; transform: scale(2.61224); transform-origin: 0 0; overflow: hidden; display: flex; flex-direction: column; background: #4f6479; font-family: "Noto Sans", "Open Sans", sans-serif; color: #111; }
.edge { height: 2.8px; flex: none; background: linear-gradient(#8b9099 0, #9a9da3 45%, #23272b 60%, #23272b 85%, #e8e8e8 100%); }
.menubar { height: 27.7px; flex: none; background: #f3f5f4; display: flex; justify-content: space-between; }
.menu { display: flex; gap: 17.7px; padding-top: 5.6px; margin-left: -1px; }
.winbtns { display: flex; padding-top: 1.5px; }
.lock { width: 20.5px; height: 21px; margin: .5px 2px 0 0; background: radial-gradient(#c03440 20%, #8c1c22 60%, #5c1014); border: 1.3px solid #1d1010; box-sizing: border-box; box-shadow: -1px 0 #a4a8a6; }
.lock svg, .wb svg { display: block; width: 100%; height: 100%; }
.wb { width: 22px; height: 24px; background: linear-gradient(#dfedf8 40%, #e9f5fb); border: 1px solid #a8bcc7; box-sizing: border-box; margin-right: 1.5px; }
.wb.last { margin-right: -1.5px; }
.bar { flex: none; display: flex; }
.bar1 { height: 46.700px; border-top: 2.400px solid #eef1ef; position: relative; background: #4f6479; box-sizing: border-box; }
.bar1::before { content: ""; position: absolute; left: 0; right: 0; top: -2.400px; height: .7px; background: #9aa1a0; }
.seg { display: flex; align-items: flex-start; padding-top: 7.200px; box-sizing: border-box; overflow: hidden; background: linear-gradient(#6c7c84 0, #6a7981 15%, #5e6c76 50%, #54616d 78%, #54667a 100%); }
.s0 { width: 241px; margin-right: 54.2px; }
.s1 { width: 850.2px; margin-right: 30.2px; }
.s2 { width: 310.2px; }
.bar2 { height: 40.8px; padding-top: 4px; box-sizing: border-box; align-items: flex-start; background: linear-gradient(#6c7c86 0, #6a7a83 15%, #5d6b75 50%, #54616e 78%, #53687d 100%); }
.btn { height: 27.8px; flex: none; box-sizing: border-box; border-radius: 3px; border: 2.200px solid #0b1114; background: radial-gradient(ellipse at 75% 60%, #7595a2 0, #5a737f 45%, #475862 85%); box-shadow: inset 0 .8px #9bb0b8, inset .8px 0 #71858e, inset 0 -1px #7f9aa5, 1px 2.500px 2.500px rgba(10, 16, 22, .6); }
.btn svg { display: block; width: calc(100% + 4.400px); height: 27.800px; margin: -2.200px; overflow: visible; fill: none; stroke: #f3f6f6; stroke-width: 1.2; }
.off { background: #46525c; border: 1.200px solid #2f3a42; box-shadow: none; }
.off svg { margin: -1.200px; width: calc(100% + 2.400px); stroke: #56616a; }
.lit { background: radial-gradient(#f1fcff 20%, #b9e6f8 70%, #93d2f2); box-shadow: none; }
.disp { height: 26px; margin-top: .8px; flex: none; box-sizing: border-box; background: #0a0e10; border-radius: 3px; color: #c3c9cf; font-family: "Liberation Sans", sans-serif; display: flex; justify-content: flex-end; padding: 5px 3.500px 0 0; box-shadow: 0 0 0 1px #4f5b65; }
.bold { font-weight: 700; padding-right: 4.500px; }
.grip { height: 25px; flex: none; background: radial-gradient(circle, #14191c 0 .75px, transparent .9px); background-size: 2.400px 2.080px; margin-top: -1.500px; }
.main { height: 744.500px; flex: none; display: flex; align-items: stretch; padding-top: .3px; box-sizing: border-box; }
.editor { width: 1473.500px; flex: none; display: flex; flex-direction: column; }
.whiteline { height: 1.700px; margin: .2px 0 .2px; background: #edefee; flex: none; }
.cols { display: flex; height: 739.400px; }
.left { width: 10px; flex: none; display: flex; flex-direction: column; }
.left svg { display: block; }
.lgap { height: 19.700px; flex: none; border-right: .6px solid #8195a4; }
.lbtn { height: 18.500px; box-sizing: border-box; flex: none; background: #7f8a88; border-right: 2px solid #e6e8e6; border-bottom: 1.600px solid #f2f4f2; }
.lgap2 { height: 19.100px; flex: none; }
.keys { height: 426.700px; background: #fcfdf0; flex: none; }
.lgap3 { height: 8.400px; flex: none; }
.lnames { height: 223.500px; flex: none; background: #f1f3f2; }
.lscroll { flex: 1; background: #eef1f0; }
.split { width: 8px; flex: none; background: linear-gradient(90deg, #5d7288, #4f6479 30%, #4f6479 75%, #3d5065); }
.center { width: 1431.500px; flex: none; display: flex; flex-direction: column; }
.center > * { flex: none; }
.teal { height: 19.700px; background: #6e8a97; position: relative; }
.tip { position: absolute; left: 934.800px; top: 2.200px; width: 61.400px; height: 14px; box-sizing: border-box; padding: .9px 0 0 5px; background: #99a19b; color: #f6f8f6; font-weight: 600; }
.tip::after { content: ""; position: absolute; left: 31.700px; top: 14px; width: .8px; height: 24px; background: #c4c9c8; }
.ruler { height: 19.100px; background: #0a0a0a; display: flex; color: #e2e5e5; }
.rb { flex: none; box-sizing: border-box; padding: .9px 0 0 1.700px; border-left: .8px solid #6d7272; }
.rb:first-child { border: 0; padding-left: 0; }
.underline { height: 1.700px; background: #6e818c; }
.gap { height: 16.800px; background: linear-gradient(#4f6479 90%, #3f546b); }
.gap2 { height: 8.400px; background: linear-gradient(#4f6479 80%, #405468); }
.roll, .lanes { display: block; }
.hrow { display: flex; height: 23.400px; }
.hscroll { width: 1374.500px; background: linear-gradient(#eaeded, #f1f3f2 25%); position: relative; display: flex; align-items: center; justify-content: space-between; padding: 0 7px 0 6px; box-sizing: border-box; }
.a1, .a2 { width: 6px; height: 9px; }
.hthumb { position: absolute; left: 473.400px; top: .8px; width: 18.200px; height: 20.800px; box-sizing: border-box; border: .9px solid #858d90; border-radius: 1.500px; background: linear-gradient(#f6f7f7 0 45%, #d3d9dc 55%, #c6ced2); box-shadow: inset 0 0 0 .7px #fbfcfc; }
.mag { width: 17px; height: 17px; margin: 3px 0 0 3.500px; }
.vslider { width: 6.500px; height: 18px; margin: 2px .5px 0 4px; border: 1px solid #eef1f1; border-color: #f4f6f6 #8fa5b4; background: linear-gradient(#4f6f8a 38%, #2a1216 38%); box-sizing: content-box; }
.right { width: 24px; flex: none; display: flex; flex-direction: column; }
.nub { height: 3px; margin: 46.700px 1.500px 6px 0; background: #4c5a61; flex: none; }
.vscroll { width: 22.500px; height: 371.800px; flex: none; position: relative; background: linear-gradient(90deg, #e5e8e8, #f0f3f3 15%, #f3f5f4); display: flex; flex-direction: column; align-items: center; justify-content: space-between; padding: 9px 0 7.500px; box-sizing: border-box; }
.up, .down { width: 9px; height: 5px; }
.vthumb { position: absolute; left: .3px; top: 252px; width: 20.800px; height: 18.500px; box-sizing: border-box; border: .9px solid #858d90; border-radius: 1.500px; background: linear-gradient(90deg, #f6f7f7 0 35%, #d6dcde 60%, #c8d0d3); box-shadow: inset 0 0 0 .7px #fbfcfc; }
.vmag { width: 17.500px; height: 17px; margin: 3.700px 0 0 2.700px; flex: none; }
.hslider { width: 21px; height: 8px; border: 1px solid #f1f3f3; border-right-color: #a3b0b8; margin: 3px 0 0; background: linear-gradient(90deg, #2a1013 62%, #4f6f86 62%); flex: none; }
.tracks { margin-left: 7.500px; width: 87px; height: 741.300px; flex: none; box-sizing: border-box; background: #f1f3f2; border-left: 1px solid #fbfdfd; border-top: 1px solid #a4aaa8; box-shadow: -1.500px 0 #3d5065; padding-top: 1.800px; overflow: hidden; font-family: "Liberation Sans", sans-serif; }
.track { height: 46.240px; display: flex; flex-direction: column; }
.l1, .l2 { display: flex; flex: none; }
.l1 { height: 22.800px; }
.name { margin: .4px 0 0 3.800px; }
.sw { width: 18.200px; height: 17.900px; margin-left: .2px; margin-right: .4px; flex: none; box-shadow: 0 0 0 .5px #c9cdca; }
.box { width: 19.500px; height: 18.400px; margin-left: 2px; margin-top: -.2px; background: #fff; border-left: .8px solid #aeb2b0; border-top: .8px solid #aeb2b0; box-sizing: border-box; flex: none; }
.msr { width: 18.800px; height: 19.800px; margin-right: 1.300px; flex: none; box-sizing: border-box; border-right: 1px solid #a6aaa8; border-bottom: 1px solid #a6aaa8; border-top: .8px solid #fff; border-left: .8px solid #fff; display: flex; justify-content: center; padding: 1px 1.600px 0 0; }
.l2 { padding-left: .8px; }
.port { margin: .9px 0 0 3.500px; }
.status { height: 21.900px; flex: none; background: #f3f2f2; border-top: 1px solid #fdfdfd; box-sizing: border-box; display: flex; box-shadow: 0 -.6px #8d9aa3; }
.cell { flex: none; box-sizing: border-box; border-right: .6px solid #d2d4d3; padding-top: 4.900px; display: flex; }
.c0 { width: 761px; }
.pos { margin-left: 593.500px; }
.c1 { width: 54.600px; padding-left: 32.500px; background: #f5f6f5; }
.c2 { width: 111.400px; background: #f5f6f5; }
.c3 { width: 55.100px; background: #f5f6f5; }
.c4 { width: 111.900px; padding-left: 5px; }
.c5 { width: 201.500px; padding-left: 5px; }
.cpu, .disk { flex: none; margin-top: 2px; box-sizing: border-box; font-family: "Liberation Sans", sans-serif; padding-top: 1.600px; color: #10180f; }
.cpu { width: 90px; margin-left: 4px; padding-left: 2px; background: linear-gradient(90deg, #4d7855 69%, #73605f 69% 88.500%, #74150f 88.500%); }
.disk { width: 66px; margin-left: 2.800px; padding-left: 2.500px; background: linear-gradient(90deg, #4d7855 96%, #73605f 96%); }
</style>
